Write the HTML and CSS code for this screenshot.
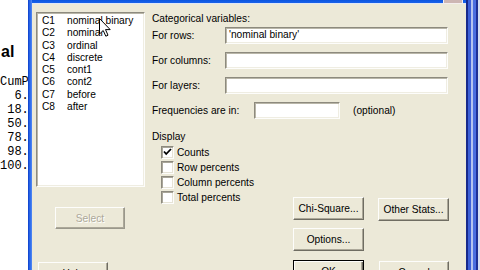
FILE: index.html
```html
<!DOCTYPE html>
<html>
<head>
<meta charset="utf-8">
<link rel="stylesheet" href="styles.css">
</head>
<body>
<div class="screen">
  <div class="output">
    <div class="out-title">al</div>
    <div class="out-lines">CumP
  6.
 18.
 50.
 78.
 98.
100.</div>
  </div>
  <div class="frame-left"></div>
  <div class="window">
    <div class="titlebar"><div class="close-edge"></div></div>
    <div class="client">
      <div class="leftcol">
        <div class="listbox">
          <div class="item"><span class="code">C1</span><span>nominal binary</span></div>
          <div class="item"><span class="code">C2</span><span>nominal</span></div>
          <div class="item"><span class="code">C3</span><span>ordinal</span></div>
          <div class="item"><span class="code">C4</span><span>discrete</span></div>
          <div class="item"><span class="code">C5</span><span>cont1</span></div>
          <div class="item"><span class="code">C6</span><span>cont2</span></div>
          <div class="item"><span class="code">C7</span><span>before</span></div>
          <div class="item"><span class="code">C8</span><span>after</span></div>
          <svg class="cursor" width="12" height="19" viewBox="0 0 12 19"><path d="M0.5 0.5 L0.5 16 L4.2 12.5 L6.8 18.2 L9 17.2 L6.5 11.6 L11.2 11.6 Z" fill="#fff" stroke="#000" stroke-width="1"/></svg>
        </div>
        <div class="btn select">Select</div>
        <div class="btn help">Help</div>
      </div>
      <div class="rightcol">
        <div class="cat-label">Categorical variables:</div>
        <div class="fields">
          <div class="field"><span class="flabel">For rows:</span><div class="input">'nominal binary'</div></div>
          <div class="field"><span class="flabel">For columns:</span><div class="input"></div></div>
          <div class="field"><span class="flabel">For layers:</span><div class="input"></div></div>
          <div class="field"><span class="flabel wide">Frequencies are in:</span><div class="input short"></div><span class="optional">(optional)</span></div>
        </div>
        <div class="lower">
          <div class="display">
            <div class="display-label">Display</div>
            <div class="checks">
              <div class="check-row"><span class="cbox"><svg width="11" height="11" viewBox="0 0 11 11"><path d="M2 4.5 L4.2 7 L9 2" fill="none" stroke="#000" stroke-width="1.8"/></svg></span><span>Counts</span></div>
              <div class="check-row"><span class="cbox"></span><span>Row percents</span></div>
              <div class="check-row"><span class="cbox"></span><span>Column percents</span></div>
              <div class="check-row"><span class="cbox"></span><span>Total percents</span></div>
            </div>
          </div>
          <div class="btn-grid">
            <div class="btn b-chi">Chi-Square...</div>
            <div class="btn b-other">Other Stats...</div>
            <div class="btn b-options">Options...</div>
            <div class="btn b-ok">OK</div>
            <div class="btn b-cancel">Cancel</div>
          </div>
        </div>
      </div>
    </div>
  </div>
  <div class="frame-right">
    <div class="s1"></div><div class="s2"></div><div class="s3"></div><div class="s4"></div><div class="s5"></div><div class="s6"></div>
  </div>
</div>
</body>
</html>
```
FILE: styles.css
```css
html, body {
  margin: 0;
  padding: 0;
}
body {
  width: 480px;
  height: 270px;
  overflow: hidden;
  font-family: "Liberation Sans", Arial, sans-serif;
  font-size: 10.2px;
  color: #000;
}
.screen {
  display: flex;
  width: 480px;
  height: 270px;
}
.output {
  width: 28px;
  flex: none;
  background: #fff;
  overflow: hidden;
}
.out-title {
  font-family: "Liberation Sans", Arial, sans-serif;
  font-weight: bold;
  font-size: 16px;
  line-height: 16px;
  margin-top: 44px;
  padding-left: 1px;
}
.out-lines {
  margin-top: 15px;
  font-family: "Liberation Mono", "Courier New", monospace;
  font-size: 12px;
  line-height: 14px;
  white-space: pre;
}
.frame-left {
  width: 4px;
  flex: none;
  background: linear-gradient(to right, #0b3dc8, #2563e6 40%, #3a76ef 75%, #5a8ef2);
}
.window {
  width: 434px;
  flex: none;
  display: flex;
  flex-direction: column;
}
.titlebar {
  height: 4px;
  flex: none;
  background: linear-gradient(to bottom, #0b55e0 0, #1a63ea 3px, #dfe7f7 3px);
  display: flex;
  justify-content: flex-end;
  padding-right: 3px;
}
.close-edge {
  width: 18px;
  height: 3px;
  background: #cdb6b3;
  border: 1px solid #f4eeee;
  border-top: none;
}
.client {
  flex: 1;
  background: #ece9d8;
  display: flex;
  padding: 8px 0 0 4px;
}
.leftcol {
  width: 109px;
  flex: none;
  display: flex;
  flex-direction: column;
}
.listbox {
  position: relative;
  height: 175px;
  box-sizing: border-box;
  background: #fff;
  border: 1px solid;
  border-color: #8d8a7e #fdfdfb #fdfdfb #8d8a7e;
  box-shadow: inset 1px 1px 0 #b9b6a8, inset -1px -1px 0 #efede2;
  padding: 2px 0 0 5px;
}
.item {
  display: flex;
  height: 12.3px;
  line-height: 12.3px;
  white-space: nowrap;
}
.code {
  width: 25px;
  flex: none;
}
.cursor {
  position: absolute;
  left: 62px;
  top: 5px;
}
.btn {
  box-sizing: border-box;
  width: 71px;
  height: 23px;
  background: #ece9d8;
  border: 1px solid;
  border-color: #fdfdfb #6f6d62 #6f6d62 #fdfdfb;
  box-shadow: inset -1px -1px 0 #aca899;
  display: flex;
  align-items: center;
  justify-content: center;
  white-space: nowrap;
}
.select {
  width: 70px;
  height: 22px;
  margin: 20px 0 0 19px;
  color: #aca899;
  text-shadow: 1px 1px 0 #fff;
  border-color: #fdfdfb #9a988c #9a988c #fdfdfb;
}
.help {
  width: 70px;
  margin: 33px 0 0 2px;
}
.rightcol {
  margin-left: 7px;
  width: 300px;
  display: flex;
  flex-direction: column;
}
.cat-label {
  line-height: 13px;
}
.fields {
  display: flex;
  flex-direction: column;
  gap: 8px;
  margin-top: 2px;
}
.field {
  display: flex;
  align-items: center;
  height: 17px;
  white-space: nowrap;
}
.flabel {
  width: 73px;
  flex: none;
}
.flabel.wide {
  width: 102px;
}
.input {
  width: 223px;
  height: 17px;
  flex: none;
  box-sizing: border-box;
  background: #fff;
  border: 1px solid;
  border-color: #8d8a7e #fdfdfb #fdfdfb #8d8a7e;
  box-shadow: inset 1px 1px 0 #b9b6a8, inset -1px -1px 0 #efede2;
  padding-left: 3px;
  line-height: 14px;
}
.input.short {
  width: 86px;
}
.optional {
  margin-left: 13px;
}
.lower {
  display: flex;
  margin-top: 11px;
}
.display {
  width: 141px;
  flex: none;
}
.display-label {
  line-height: 13px;
}
.checks {
  margin-top: 2px;
  padding-left: 9px;
}
.check-row {
  display: flex;
  align-items: center;
  gap: 3px;
  height: 15px;
  white-space: nowrap;
}
.cbox {
  width: 13px;
  height: 13px;
  flex: none;
  box-sizing: border-box;
  background: #fff;
  border: 1px solid;
  border-color: #8d8a7e #fdfdfb #fdfdfb #8d8a7e;
  box-shadow: inset 1px 1px 0 #a9a699, inset -1px -1px 0 #e6e3d6;
  display: flex;
  align-items: center;
  justify-content: center;
}
.btn-grid {
  margin-top: 67px;
  display: grid;
  grid-template-columns: 71px 71px;
  grid-auto-rows: 23px;
  column-gap: 14px;
  row-gap: 8px;
}
.b-chi { grid-column: 1; grid-row: 1; }
.b-other { grid-column: 2; grid-row: 1; margin-top: 1px; }
.b-options { grid-column: 1; grid-row: 2; }
.b-ok {
  grid-column: 1;
  grid-row: 3;
  margin-top: 1px;
  border-color: #000;
  box-shadow: inset 1px 1px 0 #fdfdfb, inset -1px -1px 0 #6f6d62, inset -2px -2px 0 #aca899;
}
.b-cancel { grid-column: 2; grid-row: 3; margin-top: 2px; margin-left: 1px; width: 70px; }
.frame-right {
  width: 14px;
  flex: none;
  display: flex;
}
.s1 { width: 2px; background: #17298c; }
.s2 { width: 3px; background: #3c60d8; }
.s3 { width: 2px; background: #b4c3ef; }
.s4 { width: 3px; background: #4a6ee0; }
.s5 { width: 2px; background: #1d3096; }
.s6 { width: 2px; background: #d6def3; }
```
